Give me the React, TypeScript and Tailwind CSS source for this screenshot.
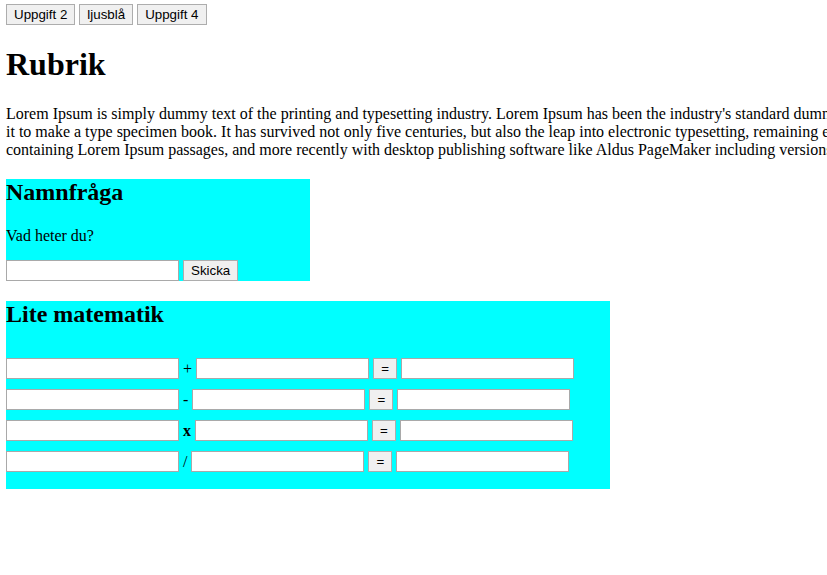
import React from "react";

const btn =
  "h-[21px] px-[7px] bg-[#f0f0f0] border border-[#adadad] font-['Liberation_Sans',Arial,sans-serif] text-[13.333px] leading-none text-black";
const field =
  "w-[173px] h-[21px] bg-white border border-[#a9a9a9] px-[2px] font-['Liberation_Sans',Arial,sans-serif] text-[13.333px]";

const rows: { op: string; bold?: boolean }[] = [
  { op: "+" },
  { op: "-" },
  { op: "x", bold: true },
  { op: "/" },
];

const App = () => {
  return (
    <div className="w-[827px] h-[575px] overflow-hidden bg-white px-[6px] pt-[4px] font-['Liberation_Serif','Times_New_Roman',serif] text-[16px] leading-[normal] text-black">
      <div className="flex gap-[4px]">
        <button className={btn}>Uppgift 2</button>
        <button className={btn}>ljusblå</button>
        <button className={btn}>Uppgift 4</button>
      </div>

      <h1 className="mt-[21px] text-[32px] font-bold leading-[normal]">Rubrik</h1>

      <p className="mt-[22px] whitespace-nowrap">
        Lorem Ipsum is simply dummy text of the printing and typesetting industry. Lorem Ipsum has been the industry's standard dummy text ever since the 1500s, when an unknown printer took a galley of type and scrambled
        <br />
        it to make a type specimen book. It has survived not only five centuries, but also the leap into electronic typesetting, remaining essentially unchanged. It was popularised in the 1960s with the release of Letraset sheets
        <br />
        containing Lorem Ipsum passages, and more recently with desktop publishing software like Aldus PageMaker including versions of Lorem Ipsum.
      </p>

      {/* namnfråga */}
      <div className="mt-[20px] w-[304px] bg-[#00ffff]">
        <h2 className="text-[24px] font-bold leading-[normal]">Namnfråga</h2>
        <p className="mt-[21px]">Vad heter du?</p>
        <div className="mt-[15px] flex gap-[4px]">
          <input className={field} />
          <button className={btn}>Skicka</button>
        </div>
      </div>

      {/* matte */}
      <div className="mt-[20px] w-[604px] bg-[#00ffff] pb-[17px]">
        <h2 className="text-[24px] font-bold leading-[normal]">Lite matematik</h2>
        <div className="mt-[30px] flex flex-col gap-[10px]">
          {rows.map((r) => (
            <div key={r.op} className="flex items-center gap-[4px]">
              <input className={field} />
              <span className={r.bold ? "font-bold" : ""}>{r.op}</span>
              <input className={field} />
              <button className={`${btn} w-[24px] px-0`}>=</button>
              <input className={field} />
            </div>
          ))}
        </div>
      </div>
    </div>
  );
};

export default App;
